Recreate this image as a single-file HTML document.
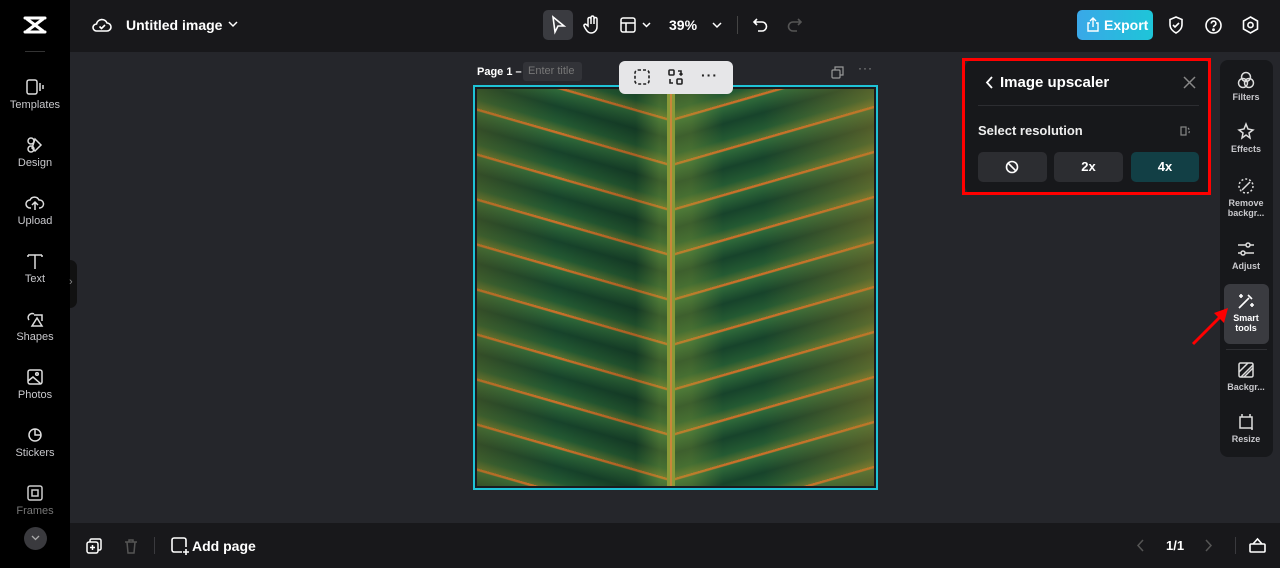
<!DOCTYPE html>
<html><head><meta charset="utf-8"><style>
*{box-sizing:border-box;margin:0;padding:0}
body{width:1280px;height:568px;overflow:hidden;background:#25262b;font-family:"Liberation Sans",sans-serif;color:#fff;position:relative}
.a{position:absolute}
.side{left:0;top:0;width:70px;height:568px;background:#000}
.top{left:70px;top:0;width:1210px;height:52px;background:#18181b}
.bot{left:70px;top:523px;width:1210px;height:45px;background:#18181b}
.ni{position:absolute;left:0;width:70px;text-align:center;font-size:11px;color:#c8c8cc}
.ni svg{display:block;margin:0 auto 3px}
.ri{position:absolute;left:1220px;width:52px;text-align:center;font-size:9px;font-weight:bold;color:#c8c8cc;line-height:10px}
.ri svg{display:block;margin:0 auto 3px}
svg{overflow:visible}
.half{position:absolute;top:-60px;height:520px;background:repeating-linear-gradient(180deg,#c8702a 0,#c8702a 2px,#2f6a3a 3px,#17432b 20px,#245a32 36px,#5a7030 45px)}
</style></head><body>
<div class="a side"></div>
<div class="a top"></div>
<div class="a bot"></div>
<!-- logo -->
<svg class="a" style="left:22px;top:15px" width="26" height="20" viewBox="0 0 26 20" fill="none" stroke="#fff" stroke-width="3" stroke-linecap="round"><path d="M3 3h20M3 17h20M5 4l16 12M21 4L5 16"/></svg>
<div class="a" style="left:25px;top:51px;width:20px;height:1px;background:#333"></div>
<div class="ni" style="top:78px"><svg width="20" height="18" viewBox="0 0 20 18" fill="none" stroke="#ddd" stroke-width="1.5"><rect x="2" y="2" width="10" height="14" rx="2"/><path d="M15 5v8M18 7v4"/></svg>Templates</div>
<div class="ni" style="top:136px"><svg width="20" height="18" viewBox="0 0 20 18" fill="none" stroke="#ddd" stroke-width="1.5"><circle cx="6" cy="5" r="3"/><path d="M10 3l6 6-6 6-3-3z"/><circle cx="6" cy="13" r="3"/></svg>Design</div>
<div class="ni" style="top:194px"><svg width="20" height="18" viewBox="0 0 20 18" fill="none" stroke="#ddd" stroke-width="1.5"><path d="M6 14H5a4 4 0 010-8 5 5 0 019 0 4 4 0 011 8h-1M10 16V9M7 11l3-3 3 3"/></svg>Upload</div>
<div class="ni" style="top:252px"><svg width="20" height="18" viewBox="0 0 20 18" fill="none" stroke="#ddd" stroke-width="1.5"><path d="M3 3h14M10 3v14M3 3v2M17 3v2"/></svg>Text</div>
<div class="ni" style="top:310px"><svg width="20" height="18" viewBox="0 0 20 18" fill="none" stroke="#ddd" stroke-width="1.5"><path d="M4 10a4 4 0 015-6M9 5h8v6M12 8l5 8H7z"/></svg>Shapes</div>
<div class="ni" style="top:368px"><svg width="20" height="18" viewBox="0 0 20 18" fill="none" stroke="#ddd" stroke-width="1.5"><rect x="3" y="2" width="14" height="14" rx="2"/><circle cx="12" cy="6" r="1.3"/><path d="M3 13l5-4 8 7"/></svg>Photos</div>
<div class="ni" style="top:426px"><svg width="20" height="18" viewBox="0 0 20 18" fill="none" stroke="#ddd" stroke-width="1.5"><circle cx="10" cy="9" r="6"/><path d="M10 3v6h6"/></svg>Stickers</div>
<div class="ni" style="top:484px;color:#777"><svg width="20" height="18" viewBox="0 0 20 18" fill="none" stroke="#ccc" stroke-width="1.5"><rect x="3" y="2" width="14" height="14" rx="2"/><rect x="7" y="6" width="6" height="6"/></svg>Frames</div>
<div class="a" style="left:24px;top:527px;width:23px;height:23px;border-radius:50%;background:#3a3a3e"></div>
<svg class="a" style="left:31px;top:535px" width="9" height="6" viewBox="0 0 9 6" fill="none" stroke="#aaa" stroke-width="1.3"><path d="M1 1l3.5 3.5L8 1"/></svg>
<div class="a" style="left:70px;top:260px;width:7px;height:48px;background:#111;border-radius:0 8px 8px 0"></div>
<div class="a" style="left:69px;top:276px;font-size:11px;color:#888">›</div>
<!-- top bar -->
<svg class="a" style="left:92px;top:16px" width="20" height="18" viewBox="0 0 20 18" fill="none" stroke="#fff" stroke-width="1.6"><path d="M5 15H4.5a3.5 3.5 0 010-7 5.5 5.5 0 0110.5-1 4 4 0 010 8z"/><path d="M7.5 10.5l2 2 3.5-3.5"/></svg>
<div class="a" style="left:126px;top:17px;font-size:14px;font-weight:bold">Untitled image</div>
<svg class="a" style="left:228px;top:21px" width="10" height="6" viewBox="0 0 10 6" fill="none" stroke="#fff" stroke-width="1.5"><path d="M1 1l4 4 4-4"/></svg>
<div class="a" style="left:543px;top:10px;width:30px;height:30px;border-radius:5px;background:#3a3b40"></div>
<svg class="a" style="left:551px;top:16px" width="14" height="18" viewBox="0 0 14 18" fill="none" stroke="#fff" stroke-width="1.6"><path d="M2 1l11 9H7l-3 6z"/></svg>
<svg class="a" style="left:583px;top:15px" width="18" height="20" viewBox="0 0 18 20" fill="none" stroke="#fff" stroke-width="1.5"><path d="M5 11V4a1.5 1.5 0 013 0v5V2.5a1.5 1.5 0 013 0V9V4a1.5 1.5 0 013 0v8a6 6 0 01-6 6c-3 0-4-2-6-5l-1-2a1.4 1.4 0 012.3-1.4z"/></svg>
<svg class="a" style="left:620px;top:17px" width="16" height="16" viewBox="0 0 16 16" fill="none" stroke="#fff" stroke-width="1.5"><rect x="1" y="1" width="14" height="14" rx="2"/><path d="M1 6h14M6 6v9"/></svg>
<svg class="a" style="left:642px;top:22px" width="9" height="6" viewBox="0 0 9 6" fill="none" stroke="#fff" stroke-width="1.5"><path d="M1 1l3.5 3.5L8 1"/></svg>
<div class="a" style="left:669px;top:17px;font-size:14px;font-weight:bold">39%</div>
<svg class="a" style="left:712px;top:22px" width="10" height="6" viewBox="0 0 10 6" fill="none" stroke="#fff" stroke-width="1.5"><path d="M1 1l4 4 4-4"/></svg>
<div class="a" style="left:737px;top:16px;width:1px;height:18px;background:#444"></div>
<svg class="a" style="left:752px;top:17px" width="16" height="16" viewBox="0 0 16 16" fill="none" stroke="#fff" stroke-width="1.6"><path d="M5 2L2 5l3 3M2 5h8a4.5 4.5 0 010 9H6"/></svg>
<svg class="a" style="left:787px;top:17px" width="16" height="16" viewBox="0 0 16 16" fill="none" stroke="#555" stroke-width="1.6"><path d="M11 2l3 3-3 3M14 5H6a4.5 4.5 0 000 9h4"/></svg>
<div class="a" style="left:1077px;top:10px;width:76px;height:30px;border-radius:5px;background:linear-gradient(90deg,#3aa8e8,#1ec5d8)"></div>
<svg class="a" style="left:1086px;top:17px" width="14" height="15" viewBox="0 0 14 15" fill="none" stroke="#fff" stroke-width="1.4"><path d="M4 6H2v8h10V6h-2M7 10V1M4 4l3-3 3 3"/></svg>
<div class="a" style="left:1104px;top:17px;font-size:14px;font-weight:bold">Export</div>
<svg class="a" style="left:1168px;top:16px" width="16" height="18" viewBox="0 0 16 18" fill="none" stroke="#fff" stroke-width="1.6"><path d="M8 1l6 2.5v5c0 4-3 7-6 8.5-3-1.5-6-4.5-6-8.5v-5z"/><path d="M5 9l2 2 4-4"/></svg>
<svg class="a" style="left:1205px;top:17px" width="17" height="17" viewBox="0 0 17 17" fill="none" stroke="#fff" stroke-width="1.6"><circle cx="8.5" cy="8.5" r="7.5"/><path d="M6.3 6.5a2.3 2.3 0 114 1.5c-.8.6-1.8 1-1.8 2.2"/><circle cx="8.5" cy="12.7" r=".6" fill="#fff"/></svg>
<svg class="a" style="left:1242px;top:16px" width="17" height="18" viewBox="0 0 17 18" fill="none" stroke="#fff" stroke-width="1.6"><path d="M8.5 1l7 4v8l-7 4-7-4V5z"/><circle cx="8.5" cy="9" r="2.6"/></svg>
<!-- canvas header -->
<div class="a" style="left:477px;top:66px;font-size:11px;font-weight:bold">Page 1 –</div>
<div class="a" style="left:523px;top:62px;width:59px;height:19px;border-radius:3px;background:#323338;font-size:11px;color:#777;padding:3px 5px">Enter title</div>
<svg class="a" style="left:831px;top:66px" width="13" height="13" viewBox="0 0 13 13" fill="none" stroke="#999" stroke-width="1.2"><rect x="1" y="4" width="8" height="8" rx="1"/><path d="M4 4V1h8v8H9"/></svg>
<div class="a" style="left:858px;top:61px;font-size:12px;color:#999;letter-spacing:1px">···</div>
<!-- image -->
<div class="a" style="left:473px;top:85px;width:405px;height:405px;border:2px solid #1fc3d6;background:#1a1b1f;padding:2px">
<div style="position:relative;width:397px;height:397px;overflow:hidden;background:#23502f">
<div class="half" style="left:0;width:194px;transform:skewY(16deg);transform-origin:194px 50%"></div>
<div class="half" style="left:194px;width:203px;transform:skewY(-16deg);transform-origin:0 50%"></div>
<div style="position:absolute;inset:0;background:linear-gradient(90deg,rgba(120,100,30,.3),rgba(0,0,0,0) 20%,rgba(0,0,0,.15) 40%,rgba(150,160,50,.3) 46%,rgba(150,160,50,.3) 54%,rgba(0,0,0,0) 62%,rgba(0,0,0,0) 72%,rgba(170,130,40,.4))"></div>
<div style="position:absolute;left:190px;top:0;width:8px;height:397px;background:#8a9a38"></div>
<div style="position:absolute;left:193px;top:0;width:2px;height:397px;background:#c8863a"></div>
</div></div>
<!-- floating toolbar -->
<div class="a" style="left:619px;top:61px;width:114px;height:33px;border-radius:6px;background:#e6e6e8"></div>
<svg class="a" style="left:634px;top:69px" width="16" height="16" viewBox="0 0 16 16" fill="none" stroke="#222" stroke-width="1.6" stroke-dasharray="3 2"><rect x="1" y="1" width="14" height="14" rx="3"/></svg>
<svg class="a" style="left:668px;top:69px" width="16" height="16" viewBox="0 0 16 16" fill="none" stroke="#222" stroke-width="1.6"><rect x="1" y="1" width="5" height="5" rx="1"/><rect x="9" y="10" width="5" height="5" rx="1"/><path d="M10 2h3v4M11.5 4.5L13 6l1.5-1.5M5 14H2v-4"/></svg>
<div class="a" style="left:701px;top:67px;font-size:14px;color:#222;font-weight:bold;letter-spacing:1px">···</div>
<!-- upscaler panel -->
<div class="a" style="left:965px;top:60px;width:245px;height:134px;border-radius:8px;background:#17181b"></div>
<div class="a" style="left:962px;top:58px;width:249px;height:137px;border:3px solid #f00"></div>
<svg class="a" style="left:985px;top:76px" width="8" height="13" viewBox="0 0 8 13" fill="none" stroke="#fff" stroke-width="1.8"><path d="M7 1L2 6.5 7 12"/></svg>
<div class="a" style="left:1000px;top:74px;font-size:15px;font-weight:bold">Image upscaler</div>
<svg class="a" style="left:1183px;top:76px" width="13" height="13" viewBox="0 0 13 13" fill="none" stroke="#888" stroke-width="1.5"><path d="M1 1l11 11M12 1L1 12"/></svg>
<div class="a" style="left:978px;top:105px;width:221px;height:1px;background:#2c2d31"></div>
<div class="a" style="left:978px;top:123px;font-size:13px;font-weight:bold;color:#eee">Select resolution</div>
<svg class="a" style="left:1180px;top:125px" width="12" height="12" viewBox="0 0 12 12" fill="none" stroke="#888" stroke-width="1.2"><rect x="1" y="2" width="5" height="8"/><path d="M8 3a4 4 0 010 6" stroke-dasharray="2 1.5"/></svg>
<div class="a" style="left:978px;top:152px;width:69px;height:30px;border-radius:5px;background:#2c2d31"></div>
<svg class="a" style="left:1005px;top:160px" width="14" height="14" viewBox="0 0 14 14" fill="none" stroke="#fff" stroke-width="1.6"><circle cx="7" cy="7" r="5.5"/><path d="M3 3l8 8"/></svg>
<div class="a" style="left:1054px;top:152px;width:69px;height:30px;border-radius:5px;background:#2c2d31;text-align:center;font-size:13px;font-weight:bold;line-height:30px">2x</div>
<div class="a" style="left:1131px;top:152px;width:68px;height:30px;border-radius:5px;background:#123f45;text-align:center;font-size:13px;font-weight:bold;line-height:30px">4x</div>
<!-- right rail -->
<div class="a" style="left:1220px;top:60px;width:53px;height:397px;border-radius:8px;background:#17181b"></div>
<div class="ri" style="top:71px"><svg width="18" height="18" viewBox="0 0 18 18" fill="none" stroke="#ddd" stroke-width="1.5"><circle cx="9" cy="6" r="4.5"/><circle cx="6" cy="12" r="4.5"/><circle cx="12" cy="12" r="4.5"/></svg>Filters</div>
<div class="ri" style="top:123px"><svg width="18" height="18" viewBox="0 0 18 18" fill="none" stroke="#ddd" stroke-width="1.5"><path d="M9 1l2 5 5 1-4 3 1 5-4-3-4 3 1-5-4-3 5-1z"/></svg>Effects</div>
<div class="ri" style="top:177px"><svg width="18" height="18" viewBox="0 0 18 18" fill="none" stroke="#ddd" stroke-width="1.5"><circle cx="9" cy="9" r="7" stroke-dasharray="2 2"/><path d="M5 13l8-8"/></svg>Remove<br>backgr...</div>
<div class="ri" style="top:240px"><svg width="18" height="18" viewBox="0 0 18 18" fill="none" stroke="#ddd" stroke-width="1.5"><path d="M1 5h16M1 13h16"/><circle cx="11" cy="5" r="2" fill="#17181b"/><circle cx="6" cy="13" r="2" fill="#17181b"/></svg>Adjust</div>
<div class="a" style="left:1224px;top:284px;width:45px;height:60px;border-radius:6px;background:#3a3b40"></div>
<div class="ri" style="top:292px;color:#fff"><svg width="18" height="18" viewBox="0 0 18 18" fill="none" stroke="#fff" stroke-width="1.6"><path d="M2 16L12 6M11 3l4 4M4 2v4M2 4h4M15 11v4M13 13h4"/></svg>Smart<br>tools</div>
<div class="a" style="left:1226px;top:349px;width:41px;height:1px;background:#2e2f33"></div>
<div class="ri" style="top:361px"><svg width="18" height="18" viewBox="0 0 18 18" fill="none" stroke="#ddd" stroke-width="1.5"><rect x="2" y="2" width="14" height="14" rx="1.5"/><path d="M2 11l9-9M7 16l9-9M4 16L16 4"/></svg>Backgr...</div>
<div class="ri" style="top:413px"><svg width="18" height="18" viewBox="0 0 18 18" fill="none" stroke="#ddd" stroke-width="1.5"><rect x="3" y="4" width="12" height="11"/><path d="M5 1v3M13 1v3M15 15v2"/></svg>Resize</div>
<!-- red arrow -->
<svg class="a" style="left:1190px;top:305px" width="42" height="42" viewBox="0 0 42 42"><path d="M3 39L32 10" stroke="#f00" stroke-width="3"/><path d="M38 3L24 8l10 10z" fill="#f00"/></svg>
<!-- bottom bar -->
<svg class="a" style="left:86px;top:538px" width="16" height="16" viewBox="0 0 16 16" fill="none" stroke="#fff" stroke-width="1.5"><rect x="1" y="4" width="11" height="11" rx="2"/><path d="M4 4V2.5A1.5 1.5 0 015.5 1H13.5A1.5 1.5 0 0115 2.5V10.5A1.5 1.5 0 0113.5 12H12M6.5 7v5M4 9.5h5"/></svg>
<svg class="a" style="left:124px;top:538px" width="14" height="16" viewBox="0 0 14 16" fill="none" stroke="#555" stroke-width="1.5"><path d="M1 4h12M5 4V2h4v2M3 4l1 11h6l1-11"/></svg>
<div class="a" style="left:154px;top:537px;width:1px;height:17px;background:#3a3a3e"></div>
<svg class="a" style="left:171px;top:537px" width="18" height="18" viewBox="0 0 18 18" fill="none" stroke="#fff" stroke-width="1.6"><path d="M11 15H3a2 2 0 01-2-2V3a2 2 0 012-2h10a2 2 0 012 2v7M15 12v6M12 15h6"/></svg>
<div class="a" style="left:192px;top:538px;font-size:14px;font-weight:bold">Add page</div>
<svg class="a" style="left:1136px;top:539px" width="8" height="13" viewBox="0 0 8 13" fill="none" stroke="#555" stroke-width="1.5"><path d="M7 1L2 6.5 7 12"/></svg>
<div class="a" style="left:1166px;top:538px;font-size:13px;font-weight:bold">1/1</div>
<svg class="a" style="left:1205px;top:539px" width="8" height="13" viewBox="0 0 8 13" fill="none" stroke="#555" stroke-width="1.5"><path d="M1 1l5 5.5L1 12"/></svg>
<div class="a" style="left:1235px;top:537px;width:1px;height:17px;background:#3a3a3e"></div>
<svg class="a" style="left:1249px;top:537px" width="17" height="16" viewBox="0 0 17 16" fill="none" stroke="#fff" stroke-width="1.6"><rect x="1" y="7" width="15" height="8" rx="1"/><path d="M4 7l4.5-5L13 7"/></svg>
</body></html>
